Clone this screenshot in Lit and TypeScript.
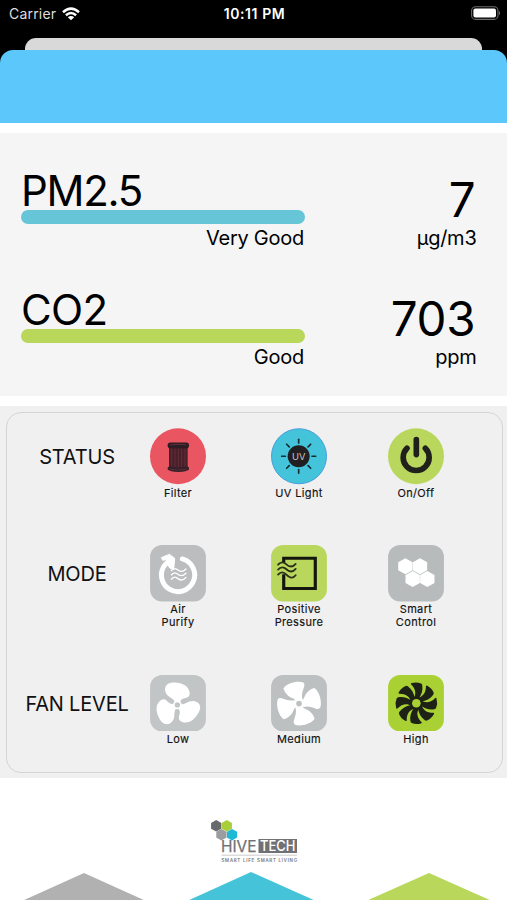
import { LitElement, html, css, svg } from "lit";
import { customElement, property } from "lit/decorators.js";

const spin = (n: number, cx: number, cy: number, d: string, start = 0) =>
  Array.from({ length: n }, (_, i) => svg`<path d=${d} transform=${`rotate(${start + (360 / n) * i} ${cx} ${cy})`} />`);

const hex = (cx: number, cy: number, r: number, fill: string) => {
  const w = r * 0.9;
  return svg`<polygon fill=${fill} points=${`${cx},${cy - r} ${cx + w},${cy - r / 2} ${cx + w},${cy + r / 2} ${cx},${cy + r} ${cx - w},${cy + r / 2} ${cx - w},${cy - r / 2}`} />`;
};

const icons = {
  filter: svg`<svg viewBox="30 24 168 168">
    <circle cx="114" cy="108" r="84" fill="#e95560" />
    <path d="M87 80H143V144H87Z" fill="#47202a" />
    <path d="M95 84V142M105 85V144M115 85V144M125 85V144M135 84V142" stroke="#743240" stroke-width="2" />
    <rect x="83" y="67" width="64" height="17" rx="8.5" fill="#2c1d22" />
    <path d="M91 74Q115 70 139 74" stroke="#6a2f3a" stroke-width="3" fill="none" />
    <path d="M88 138Q115 145 142 138Q149 141 147 148Q140 155 115 155Q90 155 83 148Q81 141 88 138Z" fill="#35202a" />
    <path d="M90 147Q115 152 140 147" stroke="#74323d" stroke-width="2" fill="none" />
  </svg>`,
  uv: svg`<svg viewBox="394 24 168 168">
    <circle cx="478" cy="108" r="82.5" fill="#43c4da" stroke="#4a9ddc" stroke-width="3" />
    <circle cx="477" cy="108" r="33" fill="#211f21" />
    ${Array.from({ length: 8 }, (_, i) => svg`<path d="M477 57V68" stroke="#152c33" stroke-width="5" stroke-linecap="round" transform=${`rotate(${i * 45} 477 108)`} />`)}
    <text x="477" y="118" text-anchor="middle" font-family="Inter, sans-serif" font-size="28" fill="#c8c8c8">UV</text>
  </svg>`,
  power: svg`<svg viewBox="53 24 168 168">
    <circle cx="137" cy="108" r="84" fill="#b9d75c" />
    <path d="M110 84A39 39 0 1 0 165 84M138 58V103" fill="none" stroke="#20211b" stroke-width="17" stroke-linecap="round" />
  </svg>`,
  purify: svg`<svg viewBox="30 30 168 170">
    <rect x="30" y="30" width="168" height="170" rx="36" fill="#bbbdbe" />
    <path d="M127 72A50 50 0 1 1 76 88L90 76" fill="none" stroke="#fff" stroke-width="15" stroke-linecap="round" stroke-linejoin="round" />
    <path d="M64 68L88 58L104 70L101 104L90 100L80 86L80 74L68 76Z" fill="#fff" stroke="#fff" stroke-width="3" stroke-linejoin="round" />
    <g fill="none" stroke="#fff" stroke-width="4" stroke-linecap="round">
      <path d="M94 107C103 98 107 100 115 106S130 110 138 102" />
      <path d="M94 120C103 111 107 113 115 119S130 123 138 115" />
      <path d="M94 133C103 124 107 126 115 132S130 136 138 128" />
    </g>
  </svg>`,
  pressure: svg`<svg viewBox="394 30 168 170">
    <rect x="394" y="30" width="168" height="170" rx="36" fill="#b9d75c" />
    <path d="M432 83V70H527V161H432V118" fill="none" stroke="#14160e" stroke-width="9.5" />
    <g fill="none" stroke="#2a3018" stroke-width="5.5" stroke-linecap="round">
      <path d="M415 89C423 80 432 80 440 88S459 98 468 87" />
      <path d="M415 104C423 95 432 95 440 103S459 113 468 102" />
      <path d="M415 119C423 110 432 110 440 119S459 133 468 121" />
    </g>
  </svg>`,
  smart: svg`<svg viewBox="53 30 168 170">
    <rect x="53" y="30" width="168" height="170" rx="36" fill="#b8bbbc" />
    ${hex(105, 94, 24, "#fff")}${hex(149, 94, 24, "#fff")}${hex(127, 132, 24, "#fff")}${hex(171, 132, 24, "#fff")}
  </svg>`,
  low: svg`<svg viewBox="30 28 168 170">
    <rect x="30" y="28" width="168" height="170" rx="36" fill="#c2c5c6" />
    <g fill="#fff">${spin(3, 112, 118, "M105 113C105 103 94 98 87 93C73 83 71 65 82 56C94 47 126 50 139 62C150 73 153 90 143 95C133 99 123 98 120 111Z")}</g>
    <circle cx="112" cy="118" r="13" fill="#fff" /><circle cx="112" cy="118" r="8" fill="#c2c5c6" />
  </svg>`,
  medium: svg`<svg viewBox="394 28 168 170">
    <rect x="394" y="28" width="168" height="170" rx="36" fill="#bdc0c1" />
    <g fill="#fff">${spin(4, 478, 114, "M468 110C469 101 461 99 452 95C443 90 434 80 431 68C441 52 474 44 490 50Q496 53 494 61C490 76 484 85 489 103L480 112Z")}</g>
    <circle cx="478" cy="114" r="8.5" fill="#bdc0c1" />
  </svg>`,
  high: svg`<svg viewBox="53 28 168 170">
    <rect x="53" y="28" width="168" height="170" rx="36" fill="#aad133" />
    <g fill="#1e2116">${spin(8, 138, 113, "M129 98C137 86 134 70 119 57Q117 54 121 53Q136 48 149 53Q152 54 153 58C156 73 153 86 144 99Z", 3)}</g>
    <circle cx="138" cy="113" r="20" fill="#1e2116" /><circle cx="138" cy="113" r="13" fill="#aad133" />
  </svg>`,
};

@customElement("air-reading")
class AirReading extends LitElement {
  @property() name = "";
  @property() value = "";
  @property() unit = "";
  @property() level = "";
  @property() tone = "";
  static styles = css`
    :host { display: flex; justify-content: space-between; height: 118.5px; padding: 0 30.5px 0 21px; }
    .left { width: 283.5px; }
    .name { font-size: 42px; line-height: 36px; letter-spacing: -1.3px; height: 37px; }
    .name.wide { letter-spacing: -0.7px; }
    .bar { height: 14px; border-radius: 7px; background: #66c5d7; }
    .bar.good { background: #b8d75b; }
    .level, .unit { font-size: 20px; line-height: 24px; text-align: right; }
    .level { letter-spacing: -0.25px; margin-top: 2px; padding-right: 0.5px; }
    .unit { letter-spacing: -0.25px; }
    .right { text-align: right; padding-top: 3px; }
    .value { font-size: 47.5px; line-height: 48px; height: 50px; padding-right: 1px; letter-spacing: -0.2px; }
  `;
  render() {
    return html`<div class="left">
        <div class="name ${this.tone ? "wide" : ""}">${this.name}</div>
        <div class="bar ${this.tone}"></div>
        <div class="level">${this.level}</div>
      </div>
      <div class="right">
        <div class="value">${this.value}</div>
        <div class="unit">${this.unit}</div>
      </div>`;
  }
}

@customElement("control-item")
class ControlItem extends LitElement {
  @property() icon: keyof typeof icons = "filter";
  @property() label = "";
  static styles = css`
    :host { display: flex; flex-direction: column; align-items: center; width: 62px; }
    .icon { width: 56px; height: 56.5px; }
    .icon svg { display: block; width: 100%; height: 100%; }
    .label { margin-top: 2.4px; font-size: 11px; line-height: 13.3px; letter-spacing: 0.35px; text-align: center; white-space: pre-line; -webkit-text-stroke: 0.15px #111; }
    .label.double { margin-top: 1px; }
  `;
  render() {
    return html`<div class="icon">${html`${icons[this.icon]}`}</div>
      <div class="label ${this.label.includes("\n") ? "double" : ""}">${this.label}</div>`;
  }
}

@customElement("app-root")
class AppRoot extends LitElement {
  static styles = css`
    :host { display: flex; flex-direction: column; height: 900px; overflow: hidden; background: #fff; color: #111; font-family: Inter, "Liberation Sans", sans-serif; }
    .top { background: #000; height: 123px; flex: none; display: flex; flex-direction: column; }
    .status { height: 38px; display: grid; grid-template-columns: 1fr auto 1fr; align-items: start; padding: 0 7px 0 9px; box-sizing: border-box; color: #fff; font-size: 14px; line-height: 28px; }
    .carrier { display: flex; align-items: center; gap: 6px; color: #dedede; letter-spacing: 0.2px; }
    .time { font-weight: 600; font-size: 14px; letter-spacing: 0.6px; }
    .battery { justify-self: end; height: 28px; display: flex; align-items: center; margin-right: -2px; }
    .behind { height: 12px; margin: 0 25px; background: #d9d9d9; border-radius: 11px 11px 0 0; }
    .sheet { flex: 1; background: #5bc7fa; border-radius: 13px 13px 0 0; }
    .readings { margin-top: 10px; height: 263px; padding-top: 40px; box-sizing: border-box; background: #f5f5f5; color: #000; flex: none; }
    .controls { margin-top: 10px; height: 372px; padding: 6px 4px 5px 6px; box-sizing: border-box; background: #f0f0f0; flex: none; }
    .panel { height: 100%; box-sizing: border-box; border: 1px solid #d4d4d4; border-radius: 15px; padding-top: 15px; display: grid; grid-template-columns: 140px 121px 117px 1fr; grid-template-rows: 117px 129.5px 1fr; }
    .heading { height: 58px; display: flex; align-items: center; justify-content: center; font-size: 20px; letter-spacing: -0.2px; }
    .footer { flex: 1; display: flex; flex-direction: column; justify-content: space-between; padding-top: 40px; }
    .logo { display: block; width: 110px; height: 48px; margin-left: 209px; overflow: visible; }
    .tabs { display: block; width: 507px; height: 29px; }
  `;
  render() {
    const rows: [string, [keyof typeof icons, string][]][] = [
      ["STATUS", [["filter", "Filter"], ["uv", "UV Light"], ["power", "On/Off"]]],
      ["MODE", [["purify", "Air\nPurify"], ["pressure", "Positive\nPressure"], ["smart", "Smart\nControl"]]],
      ["FAN LEVEL", [["low", "Low"], ["medium", "Medium"], ["high", "High"]]],
    ];
    return html`
      <div class="top">
        <div class="status">
          <div class="carrier">Carrier
            <svg width="18" height="14" viewBox="0 0 18 14" fill="none" stroke="#fff" stroke-width="2.5">
              <path d="M1 5.2Q9-2 17 5.2M3.9 8.3Q9 3.7 14.1 8.3" /><path d="M9 13.3L5.8 10.2Q9 7.6 12.2 10.2Z" fill="#fff" stroke="none" />
            </svg>
          </div>
          <div class="time">10:11 PM</div>
          <div class="battery">
            <svg width="31" height="16" viewBox="0 0 31 16">
              <rect x="0.6" y="0.8" width="26.4" height="12.6" rx="4" fill="none" stroke="#6c6c6c" stroke-width="1.1" />
              <rect x="2.4" y="2.6" width="22.6" height="9" rx="2" fill="#fff" /><path d="M28 5Q30 7.1 28 9.2Z" fill="#777" />
            </svg>
          </div>
        </div>
        <div class="behind"></div>
        <div class="sheet"></div>
      </div>
      <div class="readings">
        <air-reading name="PM2.5" value="7" unit="µg/m3" level="Very Good"></air-reading>
        <air-reading name="CO2" value="703" unit="ppm" level="Good" tone="good"></air-reading>
      </div>
      <div class="controls">
        <div class="panel">
          ${rows.map(([title, items]) => html`<div class="heading">${title}</div>
            ${items.map(([icon, label]) => html`<control-item .icon=${icon} .label=${label}></control-item>`)}`)}
        </div>
      </div>
      <div class="footer">
        <svg class="logo" viewBox="209 818 110 48" font-family="Inter, sans-serif">
          ${hex(216.2, 825.8, 5.7, "#68696d")}${hex(226.8, 825.8, 5.7, "#a8cf38")}${hex(221.4, 834.7, 5.7, "#9b9c9e")}${hex(232, 834.7, 5.7, "#20b9d5")}
          <text x="221" y="851.8" font-size="15.5" textLength="35.5" lengthAdjust="spacingAndGlyphs" fill="#707175" stroke="#707175" stroke-width=".25">HIVE</text>
          <rect x="258.5" y="839" width="38.5" height="14" fill="#707175" />
          <text x="260" y="851.3" font-size="14.5" textLength="35.5" lengthAdjust="spacingAndGlyphs" font-weight="500" fill="#fff">TECH</text>
          <path d="M221.5 855.2H297" stroke="#b5b5b7" stroke-width=".7" />
          <text x="221.5" y="862" font-size="4.4" textLength="75.5" fill="#77787b" stroke="#77787b" stroke-width=".15">SMART LIFE SMART LIVING</text>
        </svg>
        <svg class="tabs" viewBox="0 871 507 29">
          <path d="M22 901L84 873L146 901Z" fill="#b1b1b1" />
          <path d="M187 901L251 872L316 901Z" fill="#45c4d9" />
          <path d="M366 901L429 873L492 901Z" fill="#b8d75b" />
        </svg>
      </div>`;
  }
}
